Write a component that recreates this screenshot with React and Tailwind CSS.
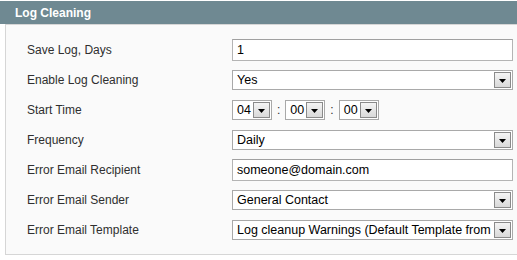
import React from "react";

function Arrow() {
  return (
    <div className="flex h-full w-[17px] shrink-0 items-center justify-center border border-[#8a8a8a] bg-gradient-to-b from-[#f4f4f4] to-[#d9d9d9]">
      <svg width="7" height="4" viewBox="0 0 7 4" className="mt-[2px]">
        <polygon points="0,0 7,0 3.5,4" fill="#000" />
      </svg>
    </div>
  );
}

function Select({ value, className = "" }) {
  return (
    <div className={"flex h-[20px] items-stretch border border-[#a9a9a9] bg-white p-[1px] " + className}>
      <div className="flex flex-1 items-center overflow-hidden whitespace-nowrap pl-[3px] text-[12.5px] leading-none text-black">
        {value}
      </div>
      <Arrow />
    </div>
  );
}

function Input({ value }) {
  return (
    <div className="flex h-[22px] w-[281px] items-center border border-[#b4b4b4] border-t-[#a0a0a0] bg-white pl-[4px] text-[12.5px] leading-none text-black">
      {value}
    </div>
  );
}

function Row({ label, children }) {
  return (
    <div className="flex h-[30px] items-center">
      <div className="w-[205px] shrink-0 text-[12px] text-[#2f2f2f]">{label}</div>
      <div className="flex items-center">{children}</div>
    </div>
  );
}

export default function App() {
  return (
    <div
      className="h-[260px] w-[517px] overflow-hidden bg-white"
      style={{ fontFamily: '"Liberation Sans", Arial, sans-serif' }}
    >
      <div className="mt-[1px] flex h-[23px] items-center bg-[#6f8992] pl-[15px] text-[12px] font-bold text-white">
        Log Cleaning
      </div>
      <div className="ml-[5px] w-[520px] border-t border-l border-b border-[#d6d6d6] bg-[#fafafa] pt-[10px] pb-[9px] pl-[21px]">
        <Row label="Save Log, Days">
          <Input value="1" />
        </Row>
        <Row label="Enable Log Cleaning">
          <Select value="Yes" className="w-[281px]" />
        </Row>
        <Row label="Start Time">
          <Select value="04" className="h-[19px] w-[40px]" />
          <span className="mx-[5px] text-[12px] text-[#2f2f2f]">:</span>
          <Select value="00" className="h-[19px] w-[40px]" />
          <span className="mx-[5px] text-[12px] text-[#2f2f2f]">:</span>
          <Select value="00" className="h-[19px] w-[40px]" />
        </Row>
        <Row label="Frequency">
          <Select value="Daily" className="w-[281px]" />
        </Row>
        <Row label="Error Email Recipient">
          <Input value="someone@domain.com" />
        </Row>
        <Row label="Error Email Sender">
          <Select value="General Contact" className="w-[281px]" />
        </Row>
        <Row label="Error Email Template">
          <Select
            value="Log cleanup Warnings (Default Template from Locale)"
            className="w-[281px]"
          />
        </Row>
      </div>
    </div>
  );
}
